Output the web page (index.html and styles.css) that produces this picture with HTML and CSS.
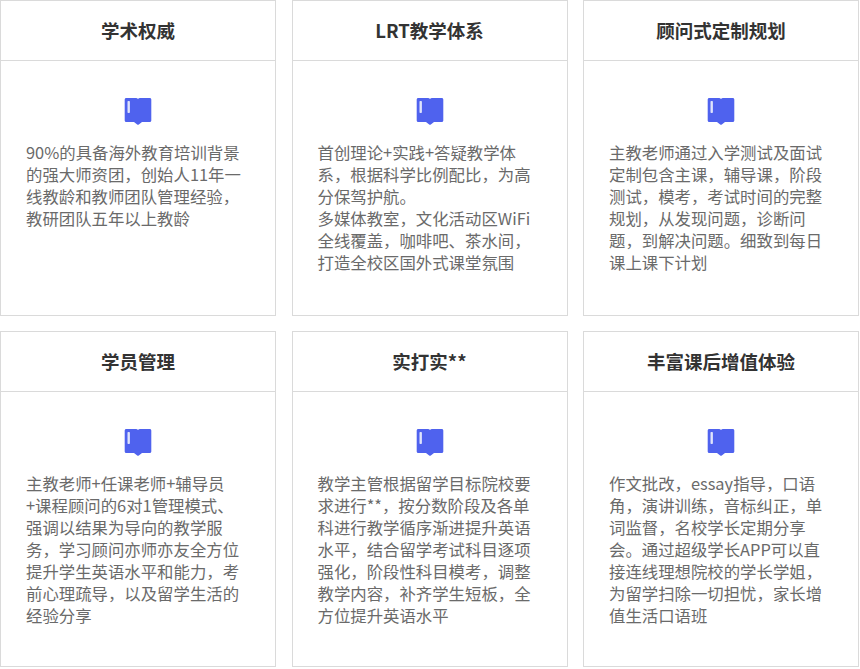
FILE: index.html
```html
<!DOCTYPE html>
<html lang="zh-CN">
<head>
<meta charset="utf-8">
<title>优势</title>
<link rel="stylesheet" href="styles.css">
</head>
<body>
<svg class="sprite" width="0" height="0" aria-hidden="true"><symbol id="book" viewBox="0 0 28 28"><path fill="#4f62ee" d="M2.200 1h9.800c.9 0 1.600.3 2 .9.4-.6 1.100-.9 2-.9h9.800c.8 0 1.500.7 1.500 1.500v21c0 .8-.7 1.500-1.500 1.500H18l-3.200 2.400c-.5.4-1.100.4-1.600 0L10 25H2.200C1.400 25 .7 24.300 .7 23.500v-21C.7 1.700 1.400 1 2.200 1z"/><rect x="3.500" y="4" width="2.400" height="12" rx=".8" fill="#dfe4fb"/></symbol></svg>
<main class="grid">
  <section class="card"><h2 class="card-title">学术权威</h2><div class="card-body"><svg class="icon"><use href="#book"/></svg><p class="card-text">90%的具备海外教育培训背景的强大师资团，创始人11年一线教龄和教师团队管理经验，教研团队五年以上教龄</p></div></section>
  <section class="card"><h2 class="card-title">LRT教学体系</h2><div class="card-body"><svg class="icon"><use href="#book"/></svg><p class="card-text">首创理论+实践+答疑教学体系，根据科学比例配比，为高分保驾护航。<br>多媒体教室，文化活动区WiFi全线覆盖，咖啡吧、茶水间，打造全校区国外式课堂氛围</p></div></section>
  <section class="card"><h2 class="card-title">顾问式定制规划</h2><div class="card-body"><svg class="icon"><use href="#book"/></svg><p class="card-text">主教老师通过入学测试及面试定制包含主课，辅导课，阶段测试，模考，考试时间的完整规划，从发现问题，诊断问题，到解决问题。细致到每日课上课下计划</p></div></section>
  <section class="card"><h2 class="card-title">学员管理</h2><div class="card-body"><svg class="icon"><use href="#book"/></svg><p class="card-text">主教老师+任课老师+辅导员<br>+课程顾问的6对1管理模式、强调以结果为导向的教学服务，学习顾问亦师亦友全方位提升学生英语水平和能力，考前心理疏导，以及留学生活的经验分享</p></div></section>
  <section class="card"><h2 class="card-title">实打实**</h2><div class="card-body"><svg class="icon"><use href="#book"/></svg><p class="card-text">教学主管根据留学目标院校要求进行**，按分数阶段及各单科进行教学循序渐进提升英语水平，结合留学考试科目逐项强化，阶段性科目模考，调整教学内容，补齐学生短板，全方位提升英语水平</p></div></section>
  <section class="card"><h2 class="card-title">丰富课后增值体验</h2><div class="card-body"><svg class="icon"><use href="#book"/></svg><p class="card-text">作文批改，essay指导，口语角，演讲训练，音标纠正，单词监督，名校学长定期分享会。通过超级学长APP可以直接连线理想院校的学长学姐，为留学扫除一切担忧，家长增值生活口语班</p></div></section>
</main>
</body>
</html>
```
FILE: styles.css
```css
* { box-sizing: border-box; }
html, body { margin: 0; padding: 0; background: #fff; }
body { width: 860px; height: 669px; overflow: hidden; font-family: "Noto Sans CJK SC", "Noto Sans", sans-serif; }
.sprite { position: absolute; }
.grid { display: grid; grid-template-columns: repeat(3, 276px); grid-template-rows: 315.5px 336.5px; gap: 15px 15.5px; }
.card { border: 1px solid #dadada; display: flex; flex-direction: column; }
.card-title { margin: 0; height: 60px; flex: none; border-bottom: 1px solid #dadada; font-size: 18.5px; font-weight: 700; line-height: 59px; text-align: center; color: #333; }
.card-body { padding: 36px 25px 0; display: flex; flex-direction: column; align-items: center; }
.icon { width: 28px; height: 28px; flex: none; }
.card-text { margin: 16px 0 0; width: 222px; align-self: flex-start; font-size: 16.4px; line-height: 22px; color: #6a6a6a; }
```
